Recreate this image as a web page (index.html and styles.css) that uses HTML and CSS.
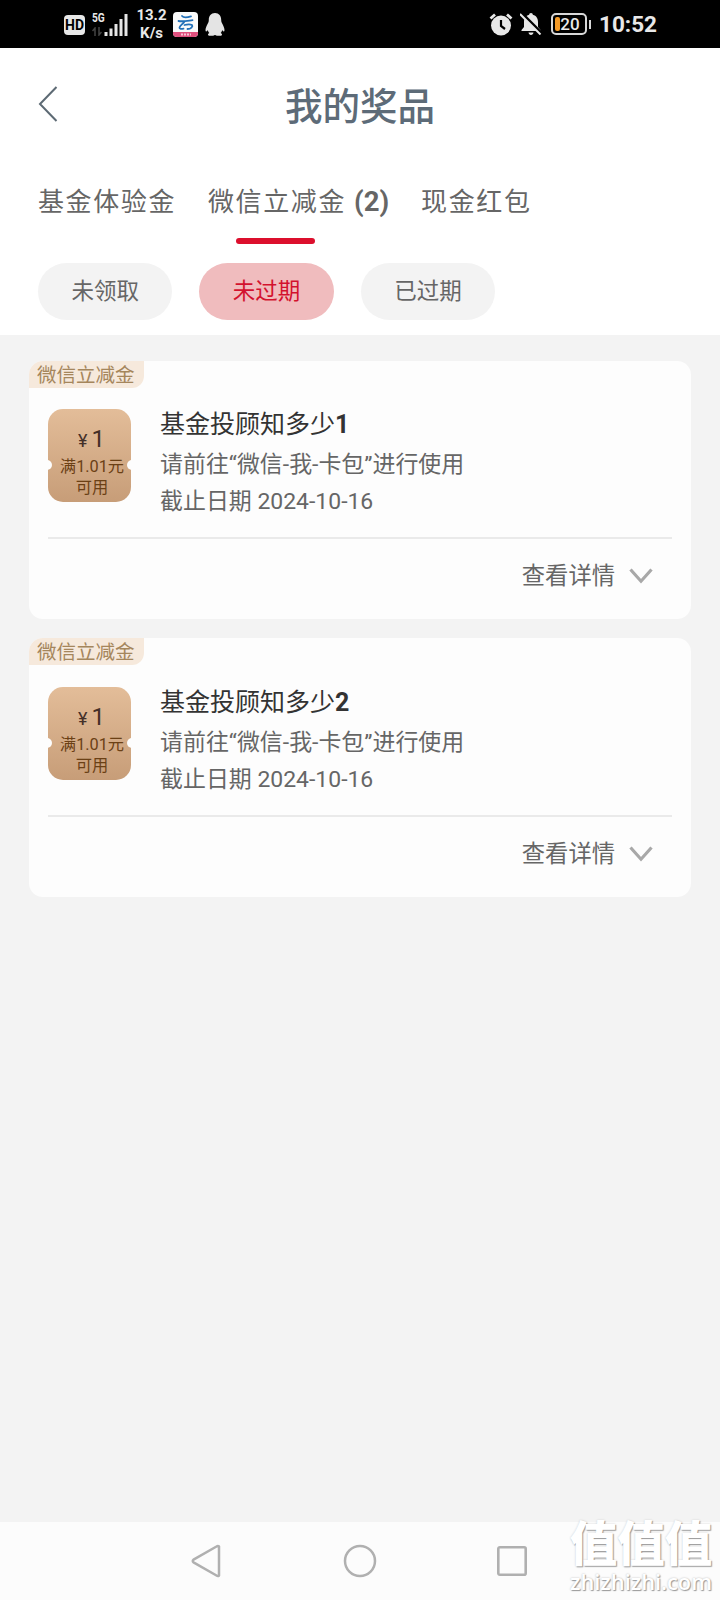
FILE: index.html
```html
<!DOCTYPE html>
<html lang="zh-CN">
<head>
<meta charset="utf-8">
<title>我的奖品</title>
<link rel="stylesheet" href="styles.css">
</head>
<body>
<div class="screen">
  <div class="status">
    <div class="status-left">
      <span class="hd">HD</span>
      <span class="net"><span class="net-5g">5G</span><svg width="10" height="9" viewBox="0 0 10 9"><path d="M3 9V1L0.500 4M7 0v8l2.500-3" fill="none" stroke="#444" stroke-width="1.500"/></svg></span>
      <svg class="bars" width="24" height="22" viewBox="0 0 24 22"><path d="M2 18v4M7 14.500V22M12 10v12M17 5v17M22 0v22" stroke="#e6e6e6" stroke-width="3"/></svg>
      <span class="speed"><span>13.2</span><span>K/s</span></span>
      <svg class="app" width="25" height="25" viewBox="0 0 25 25"><rect width="25" height="25" rx="4" fill="#fafafa"/><path d="M0 20h25v1a4 4 0 0 1-4 4H4a4 4 0 0 1-4-4z" fill="#e0507e"/><path d="M8 22.500h10" stroke="#f7c4d3" stroke-width="2" stroke-dasharray="2 1"/><path d="M9 4c1.500 1.800 5 1.500 9 .3M5.500 9c4 .8 9-.2 14-.8M11.500 9.500C10 12 7 13.500 6.500 15.500c-.3 1.600 2 1.700 4 1.200M11.500 13c3-.8 6-.8 7.500 0 1.200 1.500-1 4-4.500 4" fill="none" stroke="#2270b8" stroke-width="1.800" stroke-linecap="round"/></svg>
      <svg class="qq" width="20" height="23" viewBox="0 0 20 23"><path d="M10 0c4 0 6.200 3 6.200 7 0 2 .5 2.500 1.500 4.500C19 14 20 17 19.200 18.300c-.6.7-1.500-.4-2-1.200-.3 1.400-.8 2.200-1.600 3 1 .5 1.600 1 1.300 1.800-.5 1.200-5 1.300-6.900.1-1.900 1.200-6.400 1.100-6.900-.1-.3-.8.3-1.300 1.300-1.800-.8-.8-1.300-1.600-1.600-3-.5.8-1.400 1.900-2 1.200C0 17 1 14 2.300 11.500 3.300 9.500 3.800 9 3.800 7c0-4 2.200-7 6.200-7z" fill="#e4e4e4"/></svg>
    </div>
    <div class="status-right">
      <svg width="24" height="23" viewBox="0 0 24 23"><circle cx="12" cy="12.500" r="10" fill="#e8e8e8"/><path d="M1.500 5.500 6 1.500M22.500 5.500 18 1.500" stroke="#e8e8e8" stroke-width="2.800"/><path d="M12 7v6l4 3" fill="none" stroke="#000" stroke-width="2.200"/></svg>
      <svg class="bell" width="22" height="22" viewBox="0 0 22 22"><path d="M11 0c1.200 0 1.800.8 1.800 1.800C16.500 2.800 18 5.500 18 9v5l2.500 3v1H1.500v-1L4 14V9c0-3.500 1.500-6.200 5.200-7.200C9.200.8 9.800 0 11 0zM8.500 19.500h5C13.300 21 12.300 22 11 22s-2.300-1-2.500-2.500z" fill="#e8e8e8"/><path d="M1.500 0 22 20.500" stroke="#000" stroke-width="3"/><path d="M0 1 20.500 21.500" stroke="#e8e8e8" stroke-width="2"/></svg>
      <span class="battery"><span class="level"></span><span class="pct">20</span></span><span class="cap"></span>
      <span class="clock">10:52</span>
    </div>
  </div>

  <header class="head">
    <svg class="back" width="22" height="38" viewBox="0 0 22 38"><path d="M18.500 2 2 19 18.500 36" fill="none" stroke="#5d6a74" stroke-width="2"/></svg>
    <h1 class="title">我的奖品</h1>
  </header>

  <nav class="tabs">
    <span class="tab">基金体验金</span>
    <span class="tab tab-on">微信立减金<b class="count">(2)</b></span>
    <span class="tab">现金红包</span>
  </nav>
  <div class="filters">
    <span class="pill">未领取</span>
    <span class="pill pill-on">未过期</span>
    <span class="pill">已过期</span>
  </div>

  <main class="list">
    <section class="card">
      <span class="tag">微信立减金</span>
      <div class="row">
        <div class="coupon">
          <span class="price"><small>¥</small>1</span>
          <span class="cond">满1.01元</span>
          <span class="cond">可用</span>
        </div>
        <div class="info">
          <h2 class="name">基金投顾知多少<b>1</b></h2>
          <p class="desc">请前往“微信-我-卡包”进行使用</p>
          <p class="desc">截止日期 2024-10-16</p>
        </div>
      </div>
      <div class="more"><span>查看详情</span><svg width="24" height="16" viewBox="0 0 24 16"><path d="M1.500 1.500 12 13.200 22.500 1.500" fill="none" stroke="#a8a8a8" stroke-width="3.200"/></svg></div>
    </section>
    <section class="card">
      <span class="tag">微信立减金</span>
      <div class="row">
        <div class="coupon">
          <span class="price"><small>¥</small>1</span>
          <span class="cond">满1.01元</span>
          <span class="cond">可用</span>
        </div>
        <div class="info">
          <h2 class="name">基金投顾知多少<b>2</b></h2>
          <p class="desc">请前往“微信-我-卡包”进行使用</p>
          <p class="desc">截止日期 2024-10-16</p>
        </div>
      </div>
      <div class="more"><span>查看详情</span><svg width="24" height="16" viewBox="0 0 24 16"><path d="M1.500 1.500 12 13.200 22.500 1.500" fill="none" stroke="#a8a8a8" stroke-width="3.200"/></svg></div>
    </section>
  </main>

  <footer class="sysnav">
    <svg width="34" height="34" viewBox="0 0 34 34"><path d="M28 2.500v29q-1 1-2.500 0L2.500 18.300q-1.500-1.300 0-2.600L25.500 2.500q1.500-1 2.500 0z" fill="none" stroke="#b0b0b0" stroke-width="2.500" stroke-linejoin="round"/></svg>
    <svg width="34" height="34" viewBox="0 0 34 34"><circle cx="17" cy="17" r="15" fill="none" stroke="#b0b0b0" stroke-width="2.500"/></svg>
    <svg width="34" height="34" viewBox="0 0 34 34"><rect x="3.300" y="3.300" width="27.400" height="27.400" rx="1.500" fill="none" stroke="#b0b0b0" stroke-width="2.600"/></svg>
  </footer>
  <div class="mark"><span class="mark-cn">值值值</span><span class="mark-en">zhizhizhi.com</span></div>
</div>
</body>
</html>
```
FILE: styles.css
```css
* { box-sizing: border-box; margin: 0; padding: 0; }
body { font-family: Roboto, "Noto Sans CJK SC", sans-serif; background: #f3f3f3; }
svg { display: block; flex: none; }
.screen { position: relative; width: 720px; height: 1600px; overflow: hidden; display: flex; flex-direction: column; background: #f3f3f3; white-space: nowrap; }

.status { height: 48px; flex: none; background: #000; color: #e8e8e8; display: flex; justify-content: space-between; padding: 0 65px 0 64px; }
.status-left, .status-right { display: flex; align-items: center; }
.hd { width: 21px; height: 20px; margin-top: 1px; border-radius: 4px; background: #e8e8e8; color: #000; font-size: 14px; font-weight: 700; line-height: 21px; text-align: center; }
.net { display: flex; flex-direction: column; width: 12px; margin-left: 7px; }
.net-5g { font-size: 13px; font-weight: 700; line-height: 12px; transform: scaleX(.78); transform-origin: left; }
.net svg { margin-top: 3px; }
.bars { margin-top: 1px; }
.speed { display: flex; flex-direction: column; align-items: center; width: 31px; margin-left: 8px; font-size: 15px; font-weight: 700; line-height: 18px; }
.app { margin-left: 6px; }
.qq { margin-left: 7px; }
.bell { margin-left: 7px; }
.battery { width: 36px; height: 22px; border: 2px solid #d8d8d8; border-radius: 5px; margin-left: 9px; position: relative; }
.level { position: absolute; left: 2px; top: 2px; width: 5px; height: 14px; background: #f39a27; border-radius: 2px; }
.pct { position: relative; display: block; text-align: center; padding-left: 2px; font-size: 17px; font-weight: 500; line-height: 18px; }
.cap { width: 2px; height: 9px; background: #d8d8d8; margin-left: 2px; }
.clock { margin-left: 8px; font-size: 22.500px; font-weight: 700; width: 56px; }

.head { height: 114px; flex: none; background: #fff; display: flex; align-items: center; padding: 0 38px; }
.back { margin-top: -2px; }
.title { flex: 1; text-align: center; margin: 3px 22px 0 0; font-size: 37.500px; line-height: 50px; font-weight: 500; color: #5d6b78; }

.tabs { height: 88px; flex: none; background: #fff; display: flex; gap: 31px; padding: 19px 38px 0; font-size: 26px; letter-spacing: 1.600px; line-height: 42px; color: #666; }
.tab { position: relative; }
.tab-on { margin-left: 1px; margin-right: 1px; }
.count { font-size: 27.500px; letter-spacing: 0; margin-left: 8px; }
.tab-on::after { content: ""; position: absolute; left: 28px; top: 57px; width: 79px; height: 6px; border-radius: 3px; background: #dc0f2d; }

.filters { height: 85px; flex: none; background: #fff; display: flex; gap: 27px; padding: 13px 38px 0; }
.pill { width: 134.400px; height: 57px; border-radius: 29px; background: #f3f3f3; color: #666; font-size: 22.500px; line-height: 56px; text-align: center; }
.pill-on { background: #f0bcbe; color: #d3122e; }

.list { flex: 1; padding: 26px 29px 0; display: flex; flex-direction: column; gap: 19px; }
.card { height: 258px; background: #fdfdfd; border-radius: 14px; overflow: hidden; display: flex; flex-direction: column; align-items: flex-start; }
.card + .card { height: 259px; }
.tag { width: 115px; height: 27px; background: #f6e9dc; border-radius: 0 0 12px 0; color: #a5865c; font-size: 19.500px; line-height: 30px; padding-left: 8px; }
.row { display: flex; gap: 29px; padding: 21px 0 0 19px; height: 149px; }
.card + .card .row { padding-top: 22px; height: 150px; }
.coupon { position: relative; width: 83px; height: 93px; border-radius: 15px; background: linear-gradient(#e3bd99, #c79d78); color: #6b4015; display: flex; flex-direction: column; align-items: center; padding: 15px 0 0 5px; }
.coupon::before, .coupon::after { content: ""; position: absolute; top: 51px; width: 10px; height: 10px; border-radius: 50%; background: #fdfdfd; }
.coupon::before { left: -6px; }
.coupon::after { right: -6px; }
.price { font-size: 24px; line-height: 30px; color: #443028; margin-left: -1px; }
.price small { font-size: 18px; margin-right: 4px; }
.cond { font-size: 16.300px; line-height: 21px; }
.info { color: #666; }
.name { font-size: 25px; font-weight: 400; line-height: 32px; color: #333; margin-bottom: 5px; }
.desc { font-size: 22.950px; line-height: 37px; }
.more { align-self: stretch; margin: 0 19px; border-top: 2px solid #eaeaea; display: flex; justify-content: flex-end; align-items: center; gap: 14px; padding: 0 19px 5px 0; height: 76px; font-size: 23.300px; color: #666; }
.more svg { margin-top: 5px; }

.sysnav { height: 78px; flex: none; background: #fcfcfc; display: flex; justify-content: center; align-items: center; gap: 118px; }
.mark { position: absolute; left: 569px; top: 1520px; width: 144px; display: flex; flex-direction: column; align-items: center; color: #fff; }
.mark-cn { font-size: 47.500px; font-weight: 900; line-height: 50px; text-shadow: 1px 1px 1px #999, 0 0 2px #ccc; }
.mark-en { font-family: "Open Sans", sans-serif; font-size: 21.800px; font-weight: 600; line-height: 24px; text-shadow: 1px 1px 1px #999, 0 0 2px #bbb; }
```
